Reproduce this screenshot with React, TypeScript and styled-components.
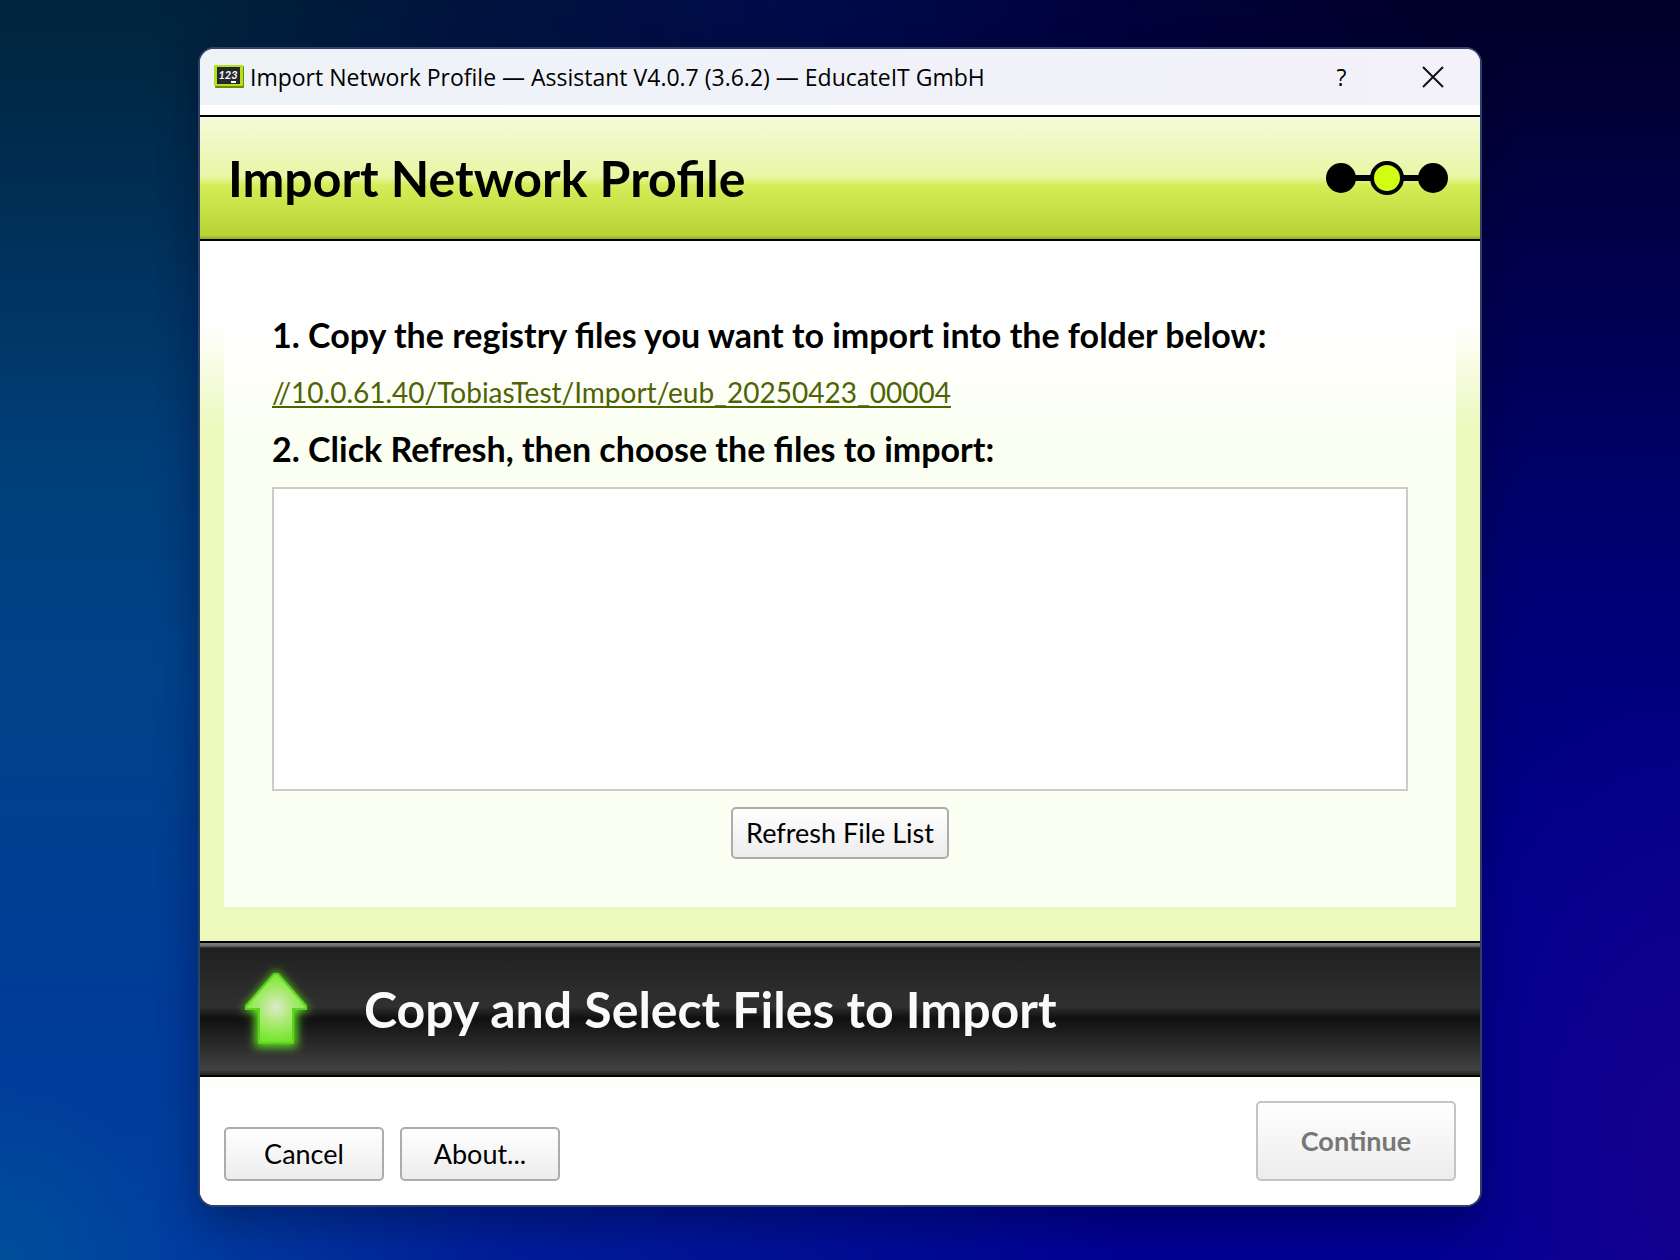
import React from "react";
import styled, { createGlobalStyle, css } from "styled-components";

const GlobalStyle = createGlobalStyle`
  *, *::before, *::after { box-sizing: border-box; }
  body { margin: 0; font-family: Lato, Roboto, sans-serif; color: #000; }
  h1, h2, p { margin: 0; }
  button { font: inherit; color: inherit; cursor: pointer; }
`;

const Desktop = styled.div`
  position: relative;
  isolation: isolate;
  min-height: 100vh;
  display: flex;
  padding: 47px 198px 53px;
  background:
    radial-gradient(ellipse 16% 40% at 100% 92%, rgba(24, 0, 144, 0.9), transparent),
    radial-gradient(ellipse 40% 20% at 46% 0%, rgba(0, 4, 84, 0.9), transparent),
    linear-gradient(#000028 0%, #00004e 22%, #000074 46%, #00008c 72%, #000092 100%);

  /* teal side of the wallpaper, fading out towards the right */
  &::before {
    content: "";
    position: absolute;
    inset: 0;
    z-index: -1;
    background:
      radial-gradient(ellipse 10% 14% at 0% 100%, #004e9a, transparent),
      linear-gradient(#00243c 0%, #003058 18%, #003e78 36%, #00438a 54%, #003c98 80%, #0040a0 100%);
    mask-image: linear-gradient(90deg, #000 9%, rgba(0, 0, 0, 0.45) 30%, transparent 68%);
  }
`;

const Window = styled.main`
  flex: 1;
  min-width: 0;
  display: flex;
  flex-direction: column;
  border: 2px solid #304168;
  border-radius: 16px;
  overflow: hidden;
  background: #fff;
  box-shadow: 0 16px 40px rgba(0, 0, 20, 0.3);
`;

const TitleBar = styled.header`
  display: flex;
  align-items: center;
  gap: 6px;
  height: 56px;
  padding: 0 14px;
  background: linear-gradient(90deg, #eef3f8, #f3f1fa);
  font: 23px/32px "Open Sans", "Noto Sans", sans-serif;
`;

const WindowTitle = styled.span`
  flex: 1;
  min-width: 0;
  white-space: nowrap;
  overflow: hidden;
`;

const TitleButton = styled.button`
  width: 67px;
  height: 48px;
  padding: 0;
  border: 0;
  background: none;
  display: grid;
  place-items: center;
`;

const TitleButtons = styled.div`
  display: flex;
  gap: 24px;
`;

const Banner = styled.div`
  display: flex;
  align-items: center;
  justify-content: space-between;
  margin-top: 10px;
  height: 126px;
  padding: 0 32px 0 28px;
  border: solid #000;
  border-width: 2px 0;
  background: linear-gradient(#f5fbdc 0%, #e8f6a4 49%, #d4ed58 56%, #b8d334 97%, #93a82a 100%);
`;

const bigText = css`
  font-size: 50px;
  line-height: 60px;
  font-weight: 700;
`;

const Heading = styled.h1`
  ${bigText}
`;

const Body = styled.section`
  flex: 1;
  display: flex;
  padding: 24px 24px 34px;
  background: linear-gradient(#fff 0, #fff 80px, #ecf8bc 190px);
`;

const Panel = styled.div`
  flex: 1;
  min-width: 0;
  display: flex;
  flex-direction: column;
  align-items: flex-start;
  padding: 46px 48px 48px;
  background: linear-gradient(#fff 0, #fff 56px, #fbfff1 180px);
`;

const Step = styled.h2`
  font-size: 34px;
  line-height: 48px;
  font-weight: 700;
`;

const FolderLink = styled.a`
  margin: 9px 0;
  font-size: 28px;
  line-height: 48px;
  color: #4f6305;
  text-decoration: underline;
  text-decoration-thickness: 2px;
  text-underline-offset: 3px;
  text-decoration-skip-ink: none;
`;

const FileList = styled.select`
  align-self: stretch;
  flex: 1;
  min-height: 304px;
  margin: 14px 0 16px;
  border: 2px solid #ccc;
  border-radius: 0;
  background: #fff;
  outline: none;
`;

const PushButton = styled.button<{ $size?: "fit" | "normal" | "large" }>`
  border: 2px solid #acacac;
  border-radius: 5px;
  background: linear-gradient(#fff, #ececec);
  font-size: 27px;
  line-height: 32px;
  padding: 8px 13px;
  white-space: nowrap;
  ${(p) => p.$size === "fit" && css`align-self: center; height: 52px;`}
  ${(p) => (p.$size ?? "normal") === "normal" && css`width: 160px; height: 54px;`}
  ${(p) => p.$size === "large" && css`width: 200px; height: 80px; font-weight: 700;`}
  &:disabled { color: #777; border-color: #c4c4c4; }
`;

const Status = styled.div`
  display: flex;
  align-items: center;
  gap: 40px;
  height: 136px;
  padding: 0 28px;
  border: solid #000;
  border-width: 2px 0;
  color: #fafafa;
  background: linear-gradient(#808080 0, #6a6a6a 3px, #202020 5px, #303030 48%, #101010 57%, #424242 96%, #222 100%);
`;

const StatusText = styled.p`
  ${bigText}
`;

const Footer = styled.footer`
  display: flex;
  align-items: flex-end;
  gap: 16px;
  padding: 24px;
  background: linear-gradient(#fdfff5, #fff 20px);
`;

const Spacer = styled.div`
  flex: 1;
`;

const BoardDigits = styled.text`
  font: italic 700 11px Lato, sans-serif;
  fill: #fff;
`;

const BoardIcon = () => (
  <svg width="30" height="24" viewBox="0 0 30 24" aria-hidden="true">
    <rect x="1" y="1" width="29" height="22" rx="1" fill="#6b8d00" />
    <rect width="29" height="21" rx="1" fill="#b4e01c" />
    <rect x="3" y="2" width="23" height="17" fill="#26292b" />
    <BoardDigits x="14" y="14" textAnchor="middle">123</BoardDigits>
    <path d="M17 17H22" stroke="#fff" strokeWidth="2" />
  </svg>
);

const Progress = () => (
  <svg width="122" height="34" viewBox="0 0 122 34" role="img" aria-label="Step 2 of 3">
    <path d="M15 17H107" stroke="#000" strokeWidth="6" />
    <circle cx="15" cy="17" r="15" />
    <circle cx="61" cy="17" r="15" fill="#d0ff14" stroke="#000" strokeWidth="4" />
    <circle cx="107" cy="17" r="15" />
  </svg>
);

const UpArrow = () => (
  <svg width="96" height="104" viewBox="0 0 96 104" aria-hidden="true">
    <defs>
      <radialGradient id="arrowFill" gradientUnits="userSpaceOnUse" cx="48" cy="50" r="36">
        <stop offset="0" stopColor="#dfe9cc" />
        <stop offset="0.5" stopColor="#a5ea6c" />
        <stop offset="1" stopColor="#72e62c" />
      </radialGradient>
      <filter id="arrowGlow" x="-40%" y="-40%" width="180%" height="180%">
        <feGaussianBlur stdDeviation="5" />
      </filter>
    </defs>
    <path d="M48 13 82 54H69V90H27V54H14Z" fill="#62e820" filter="url(#arrowGlow)" />
    <path d="M46 17H50L78 49V52H65V86H31V52H18V49Z" fill="url(#arrowFill)" stroke="#5fd41c" strokeWidth="2" />
  </svg>
);

export default function App() {
  return (
    <>
      <GlobalStyle />
      <Desktop>
        <Window>
          <TitleBar>
            <BoardIcon />
            <WindowTitle>Import Network Profile — Assistant V4.0.7 (3.6.2) — EducateIT GmbH</WindowTitle>
            <TitleButtons>
              <TitleButton type="button">?</TitleButton>
              <TitleButton type="button" aria-label="Close">
                <svg width="22" height="22" viewBox="0 0 22 22" fill="none" stroke="#111" strokeWidth="2">
                  <path d="M1 1 21 21M21 1 1 21" />
                </svg>
              </TitleButton>
            </TitleButtons>
          </TitleBar>
          <Banner>
            <Heading>Import Network Profile</Heading>
            <Progress />
          </Banner>
          <Body>
            <Panel>
              <Step>1. Copy the registry files you want to import into the folder below:</Step>
              <FolderLink href="#folder">//10.0.61.40/TobiasTest/Import/eub_20250423_00004</FolderLink>
              <Step as="label" htmlFor="files">2. Click Refresh, then choose the files to import:</Step>
              <FileList id="files" multiple />
              <PushButton type="button" $size="fit">Refresh File List</PushButton>
            </Panel>
          </Body>
          <Status>
            <UpArrow />
            <StatusText>Copy and Select Files to Import</StatusText>
          </Status>
          <Footer>
            <PushButton type="button">Cancel</PushButton>
            <PushButton type="button">About...</PushButton>
            <Spacer />
            <PushButton type="button" $size="large" disabled>Continue</PushButton>
          </Footer>
        </Window>
      </Desktop>
    </>
  );
}
